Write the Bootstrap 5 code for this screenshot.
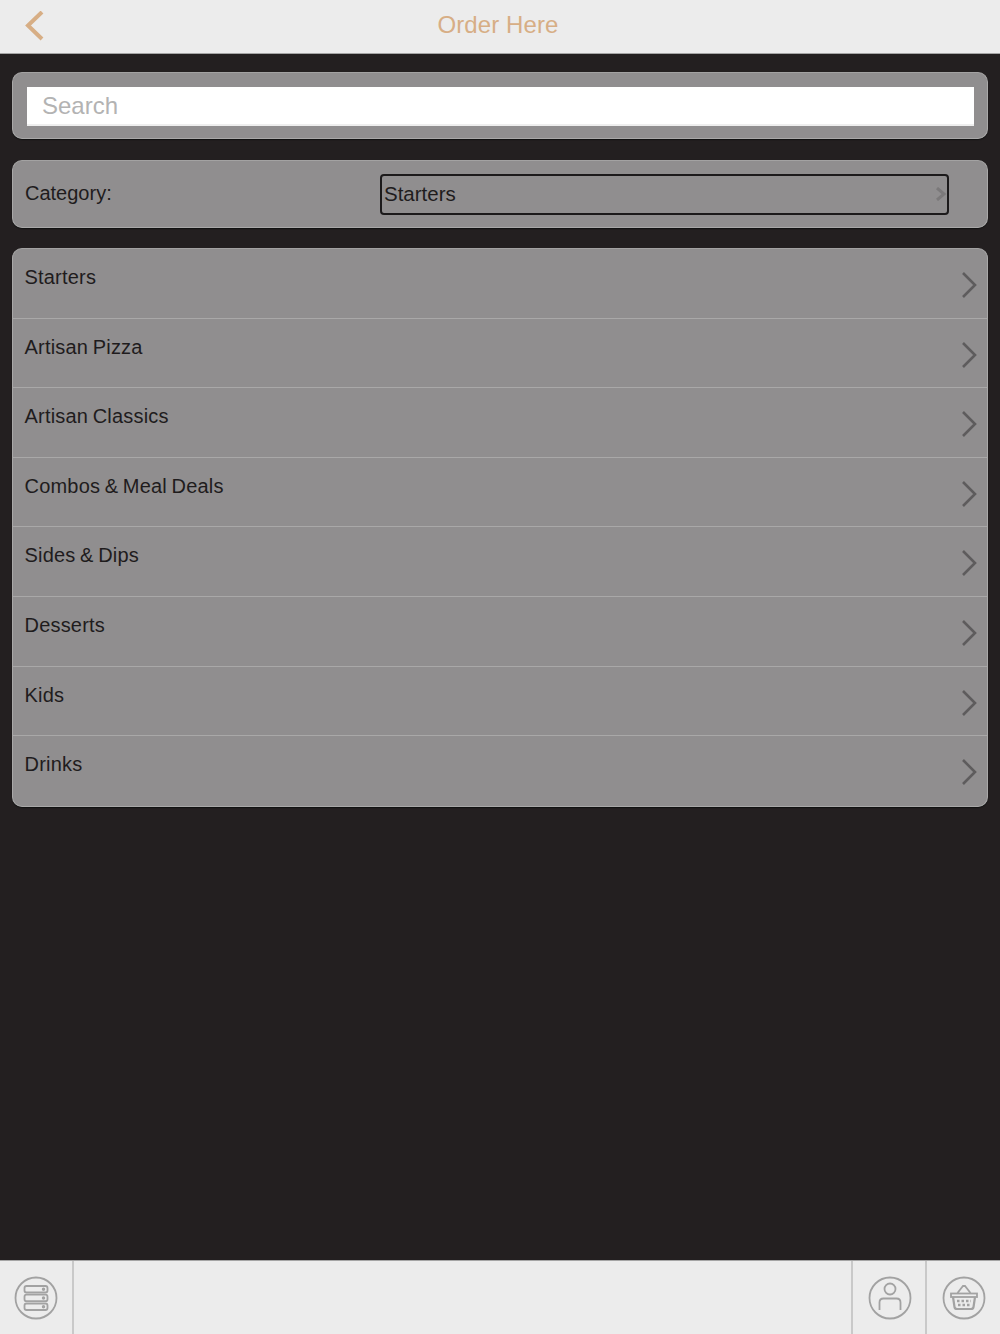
<!DOCTYPE html>
<html lang="en">
<head>
    <meta charset="UTF-8">
    <meta name="viewport" content="width=device-width, initial-scale=1.0">
    <title>Order Here</title>
    <link href="https://cdn.jsdelivr.net/npm/bootstrap@5.3.0/dist/css/bootstrap.min.css" rel="stylesheet">
    <style>
        body {
            background: #231f20;
            height: 1334px;
            font-family: "Liberation Sans", Arial, sans-serif;
            color: #1f1c1d;
        }
        .top-bar {
            height: 54px;
            background: #ececec;
            border-bottom: 1px solid #a5a5a5;
        }
        .top-bar svg { margin-left: 22px; }
        .top-title {
            color: #d7ae85;
            font-size: 24px;
            letter-spacing: .1px;
            left: 0;
            right: 4px;
            top: 9px;
            line-height: 32px;
        }
        .page-body { padding: 18px 12px 0; }
        .grey-panel {
            background: #908e8f;
            border: 1px solid #a9a8a8;
            border-top-color: #a3a2a2;
            border-radius: 10px;
            box-shadow: 0 1px 1px #111;
        }
        .search-panel { height: 67px; padding: 14px 13px 13px 14px; margin-bottom: 21px; }
        .search-field {
            height: 39px;
            border-radius: 0;
            border: 0;
            border-bottom: 2px solid #eee;
            padding: 0 15px;
            font-size: 24px;
            font-family: inherit;
            box-shadow: none;
        }
        .search-field::placeholder { color: #b3b3b3; opacity: 1; }
        .category-panel { height: 68px; margin-bottom: 20px; padding: 0 38px 0 12px; }
        .category-label { width: 355px; font-size: 20px; padding-bottom: 2px; }
        .category-select {
            height: 41px;
            border: 2px solid #1c1a1b;
            border-radius: 4px;
            padding: 0 0 0 2px;
            font-size: 20.5px;
        }
        .menu-list { --bs-list-group-bg: transparent; overflow: hidden; }
        .menu-row {
            height: 69.6px;
            background: transparent;
            color: #1f1c1d;
            border: 0;
            border-bottom: 1px solid #a9a8a8;
            border-radius: 0;
            padding: 14px 9px 0 11.5px;
            font-size: 20px;
            line-height: 29px;
            letter-spacing: .2px;
            word-spacing: -1.2px;
        }
        .menu-row:last-child { border-bottom: 0; }
        .menu-row svg { margin-top: 8px; }
        .bottom-bar {
            height: 74px;
            background: #ececec;
            border-top: 1px solid #a5a5a5;
        }
        .tab-cell { width: 74px; }
        .tab-cell svg { fill: none; stroke: #a2a2a2; stroke-width: 1.8; }
        .tab-cell.left-cell { border-right: 2px solid #c9c9c9; }
        .tab-cell.right-cell { border-left: 2px solid #c9c9c9; padding-left: 1px; }
        .tab-cell.last-cell { width: 75px; }
    </style>
</head>
<body class="d-flex flex-column">
    <!-- Top bar -->
    <div class="top-bar position-relative d-flex align-items-center flex-shrink-0">
        <svg width="24" height="32" viewBox="0 0 24 32"><path d="M20 1 L6 14.5 L20 28" fill="none" stroke="#d7ae85" stroke-width="4"/></svg>
        <div class="top-title position-absolute text-center">Order Here</div>
    </div>

    <div class="page-body flex-grow-1">
        <!-- Search -->
        <div class="grey-panel search-panel">
            <input type="text" class="form-control search-field" placeholder="Search">
        </div>

        <!-- Category -->
        <div class="grey-panel category-panel d-flex align-items-center">
            <div class="category-label flex-shrink-0">Category:</div>
            <div class="category-select flex-grow-1 d-flex align-items-center justify-content-between">
                <span>Starters</span>
                <svg width="11" height="14" viewBox="0 0 11 14"><path d="M1 1 L8 7 L1 13" fill="none" stroke="#7b797a" stroke-width="3"/></svg>
            </div>
        </div>

        <!-- Menu -->
        <div class="grey-panel list-group menu-list" id="menuList"></div>
    </div>

    <!-- Bottom bar -->
    <div class="bottom-bar d-flex justify-content-between flex-shrink-0">
        <div class="tab-cell left-cell d-flex align-items-center justify-content-center">
            <svg width="44" height="44" viewBox="0 0 44 44">
                <circle cx="22" cy="22" r="20.5"/>
                <rect x="10.5" y="10" width="23" height="6.5" rx="2"/>
                <rect x="10.5" y="18.7" width="23" height="6.5" rx="2"/>
                <rect x="10.5" y="27.5" width="23" height="6.5" rx="2"/>
                <circle cx="29.5" cy="13.2" r=".8"/><circle cx="29.5" cy="22" r=".8"/><circle cx="29.5" cy="30.7" r=".8"/>
            </svg>
        </div>
        <div class="d-flex">
            <div class="tab-cell right-cell d-flex align-items-center justify-content-center">
                <svg width="44" height="44" viewBox="0 0 44 44">
                    <circle cx="22" cy="22" r="20.5"/>
                    <circle cx="22" cy="13" r="5.5"/>
                    <path d="M11.5 34 V26.5 Q11.5 22.5 15.5 22.5 H28.5 Q32.5 22.5 32.5 26.5 V34"/>
                </svg>
            </div>
            <div class="tab-cell right-cell last-cell d-flex align-items-center justify-content-center">
                <svg width="44" height="44" viewBox="0 0 44 44">
                    <circle cx="22" cy="22" r="20.5"/>
                    <path d="M15.5 17 L21 10 H23 L28.5 17"/>
                    <rect x="9" y="17.5" width="26" height="3.5"/>
                    <path d="M11 21 L12.5 31 Q12.8 33 15 33 H29 Q31.2 33 31.5 31 L33 21" stroke-width="2.2"/>
                    <path d="M15 25 h14 M16 29 h12" stroke-width="2.4" stroke-dasharray="2.5 2"/>
                </svg>
            </div>
        </div>
    </div>

    <script src="https://cdn.jsdelivr.net/npm/bootstrap@5.3.0/dist/js/bootstrap.bundle.min.js"></script>
    <script>
        const categories = ['Starters', 'Artisan Pizza', 'Artisan Classics', 'Combos & Meal Deals', 'Sides & Dips', 'Desserts', 'Kids', 'Drinks'];
        const chevron = '<svg width="18" height="28" viewBox="0 0 18 28"><path d="M3 2 L15 14 L3 26" fill="none" stroke="#5e5c5d" stroke-width="2.6"/></svg>';

        document.getElementById('menuList').innerHTML = categories.map(name =>
            `<div class="list-group-item menu-row d-flex justify-content-between align-items-start"><span>${name.replace('&', '&amp;')}</span>${chevron}</div>`
        ).join('');
    </script>
</body>
</html>
